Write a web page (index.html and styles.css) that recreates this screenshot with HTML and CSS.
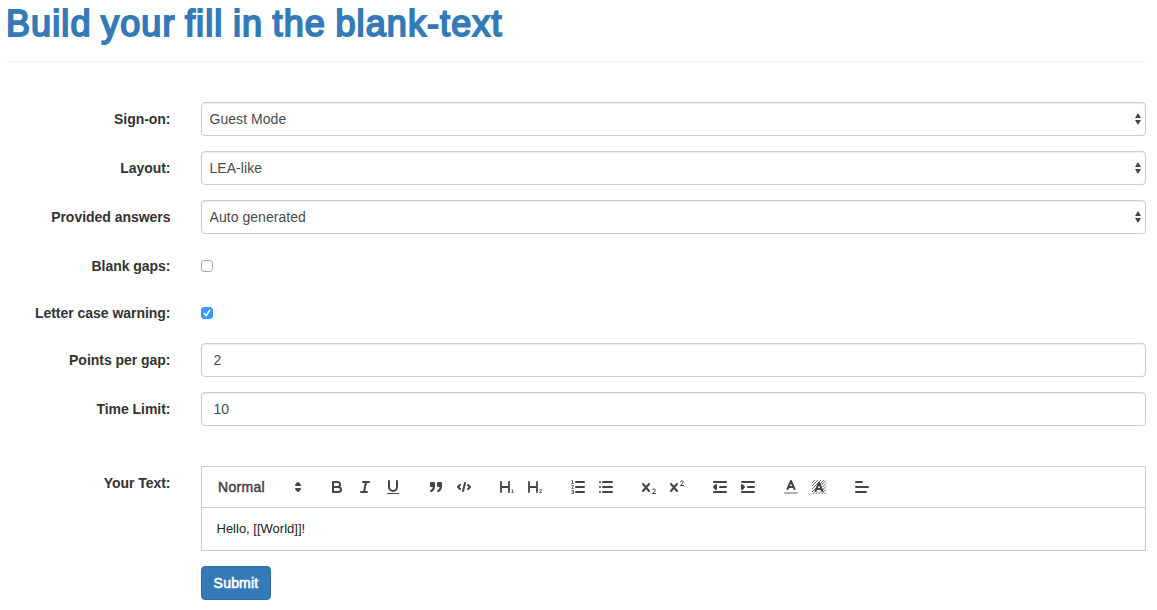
FILE: index.html
```html
<!DOCTYPE html>
<html lang="en">
<head>
<meta charset="utf-8">
<title>Build your fill in the blank-text</title>
<link rel="stylesheet" href="styles.css">
</head>
<body>
<main class="page">
  <h1 class="title">Build your fill in the blank-text</h1>
  <form class="form">
    <div class="row">
      <label class="label" for="sign">Sign-on:</label>
      <div class="select-wrap">
        <select class="control select" id="sign"><option>Guest Mode</option></select>
        <svg class="arrows" viewBox="0 0 6 12"><path d="M3 0 6 5H0ZM0 7H6L3 12Z"/></svg>
      </div>
    </div>
    <div class="row">
      <label class="label" for="layout">Layout:</label>
      <div class="select-wrap">
        <select class="control select" id="layout"><option>LEA-like</option></select>
        <svg class="arrows" viewBox="0 0 6 12"><path d="M3 0 6 5H0ZM0 7H6L3 12Z"/></svg>
      </div>
    </div>
    <div class="row">
      <label class="label" for="answers">Provided answers</label>
      <div class="select-wrap">
        <select class="control select" id="answers"><option>Auto generated</option></select>
        <svg class="arrows" viewBox="0 0 6 12"><path d="M3 0 6 5H0ZM0 7H6L3 12Z"/></svg>
      </div>
    </div>
    <div class="row row-check">
      <label class="label" for="blank">Blank gaps:</label>
      <input class="check" type="checkbox" id="blank">
    </div>
    <div class="row row-check">
      <label class="label" for="case">Letter case warning:</label>
      <span class="check-wrap"><input class="check" type="checkbox" id="case" checked><svg class="tick" viewBox="0 0 12 12"><path d="M3.3 6.4 5.2 8.7 8.8 3.2"/></svg></span>
    </div>
    <div class="row">
      <label class="label" for="points">Points per gap:</label>
      <input class="control" id="points" value="2">
    </div>
    <div class="row row-last">
      <label class="label" for="limit">Time Limit:</label>
      <input class="control" id="limit" value="10">
    </div>
    <div class="row">
      <span class="label">Your Text:</span>
      <div class="editor">
        <div class="toolbar">
          <div class="picker"><span class="picker-text">Normal</span>
            <svg class="icon" viewBox="0 0 18 18"><path class="s f" d="M7 11 9 13 11 11ZM7 7 9 5 11 7Z"/></svg>
          </div>
          <div class="group">
            <button type="button" class="tool" aria-label="Bold"><svg class="icon" viewBox="0 0 18 18"><path class="s" d="M5 4H9.5A2.5 2.5 0 0 1 9.5 9H5ZM5 9H10.5A2.5 2.5 0 0 1 10.5 14H5Z"/></svg></button>
            <button type="button" class="tool" aria-label="Italic"><svg class="icon" viewBox="0 0 18 18"><path class="s" d="M7 4H13M5 14H11M8 14 10 4"/></svg></button>
            <button type="button" class="tool" aria-label="Underline"><svg class="icon" viewBox="0 0 18 18"><path class="s" d="M5 3V9a4 4 0 0 0 8 0V3"/><rect class="f" x="3" y="15" width="12" height="1" rx=".5"/></svg></button>
          </div>
          <div class="group">
            <button type="button" class="tool" aria-label="Quote"><svg class="icon" viewBox="0 0 18 18"><path class="s f" d="M4 5H7V8H4ZM11 5H14V8H11Z"/><path class="s f" d="M7 8C7 12.03 4 13 4 13M14 8C14 12.03 11 13 11 13"/></svg></button>
            <button type="button" class="tool" aria-label="Code"><svg class="icon" viewBox="0 0 18 18"><path class="s" d="M5 7 3 9 5 11M13 7 15 9 13 11M10 5 8 13"/></svg></button>
          </div>
          <div class="group">
            <button type="button" class="tool" aria-label="Heading 1"><svg class="icon" viewBox="0 0 18 18"><path class="s heading" d="M3 4V14M11 4V14M3 9H11"/><path class="s digit" d="M13.5 11.7H14.5V14.2M13.3 14.4H15.7"/></svg></button>
            <button type="button" class="tool" aria-label="Heading 2"><svg class="icon" viewBox="0 0 18 18"><path class="s heading" d="M3 4V14M11 4V14M3 9H11"/><path class="s digit" d="M13.5 11.7H15.5V12.6L13.6 14.4H16"/></svg></button>
          </div>
          <div class="group">
            <button type="button" class="tool" aria-label="Numbered list"><svg class="icon" viewBox="0 0 18 18"><path class="s" d="M7 4H15M7 9H15M7 14H15"/><path class="s digit" d="M2.5 2.5H3.5V5.3M2.3 5.5H4.7M2.5 7.5H4.3V8.3L2.7 10.5H4.7M2.5 12.5H4.5V15.5H2.3M3 14H4.5"/></svg></button>
            <button type="button" class="tool" aria-label="Bulleted list"><svg class="icon" viewBox="0 0 18 18"><path class="s" d="M6 4H15M6 9H15M6 14H15M3 4H3M3 9H3M3 14H3"/></svg></button>
          </div>
          <div class="group">
            <button type="button" class="tool" aria-label="Subscript"><svg class="icon" viewBox="0 0 18 18"><path class="s" d="M3 6 9 13M9 6 3 13"/><path class="s thin" d="M12.5 11.8C12.8 10.4 15.3 10.5 15.3 12.1C15.3 13.6 12.5 14.5 12.5 15.5H15.6"/></svg></button>
            <button type="button" class="tool" aria-label="Superscript"><svg class="icon" viewBox="0 0 18 18"><path class="s" d="M3 6 9 13M9 6 3 13"/><path class="s thin" d="M12.5 3.8C12.8 2.4 15.3 2.5 15.3 4.1C15.3 5.6 12.5 6.5 12.5 7.5H15.6"/></svg></button>
          </div>
          <div class="group">
            <button type="button" class="tool" aria-label="Outdent"><svg class="icon" viewBox="0 0 18 18"><path class="s" d="M3 4H15M3 14H15M9 9H15"/><path class="s f" d="M5 7V11L3 9Z"/></svg></button>
            <button type="button" class="tool" aria-label="Indent"><svg class="icon" viewBox="0 0 18 18"><path class="s" d="M3 4H15M3 14H15M9 9H15"/><path class="s f" d="M3 7V11L5 9Z"/></svg></button>
          </div>
          <div class="group">
            <button type="button" class="tool" aria-label="Text colour"><svg class="icon" viewBox="0 0 18 18"><path class="s faint" d="M2.3 15H15.7"/><path class="s" d="M5.5 11 9 3 12.5 11M6.4 9H11.6"/></svg></button>
            <button type="button" class="tool" aria-label="Background colour"><svg class="icon" viewBox="0 0 18 18"><path class="hatch" d="M2 5 5 2M2 8 8 2M2 11 11 2M2 14 5.5 10.5M8.5 7.5 14 2M2.5 16 5 13.5M11.5 7 16 2.5M5.5 16 8 13.5M12.5 9 16 5.5M8.5 16 16 8.5M11.5 16 16 11.5M14.5 16 16 14.5"/><path class="s" d="M5.5 13 9 5 12.5 13M6.4 11H11.6"/></svg></button>
          </div>
          <div class="group">
            <button type="button" class="tool" aria-label="Align"><svg class="icon" viewBox="0 0 18 18"><path class="s" d="M3 4H9M3 9H15M3 14H13"/></svg></button>
          </div>
        </div>
        <div class="content">Hello, [[World]]!</div>
      </div>
    </div>
    <div class="row"><span></span><button type="button" class="submit">Submit</button></div>
  </form>
</main>
</body>
</html>
```
FILE: styles.css
```css
* { box-sizing: border-box; }
body { margin: 0; background: #fff; color: #333; font: 14px/20px "Liberation Sans", Arial, sans-serif; }
.page { padding: 0 11px 0 6px; }
.title { margin: 0 0 40px; height: 62px; padding-top: 4px; border-bottom: 1px solid #eee; color: #337ab7; font-size: 36px; line-height: 40px; font-weight: 400; letter-spacing: 1.1px; word-spacing: -1.6px; -webkit-text-stroke: 1.9px #337ab7; white-space: nowrap; }
.row { display: grid; grid-template-columns: 165px 945px; column-gap: 30px; margin-bottom: 15px; align-items: start; }
.row-check { height: 32px; }
.row-last { margin-bottom: 40px; }
.label { padding: 7px .5px 0 0; text-align: right; font-weight: 700; letter-spacing: -.03px; white-space: nowrap; }
.control { display: block; width: 100%; height: 34px; margin: 0; padding: 6px 12px 6px 11.5px; border: 1px solid #ccc; border-radius: 4px; background: #fff; box-shadow: inset 0 1px 1px rgba(0,0,0,.075); color: #4a4a4a; font: inherit; letter-spacing: .05px; }
.select-wrap { position: relative; }
.select { appearance: none; padding: 0 7.5px; }
.arrows { position: absolute; right: 5.5px; top: 11px; width: 6px; height: 12px; fill: #444; }
.check-wrap { position: relative; height: 32px; }
.check { appearance: none; display: block; width: 12px; height: 12px; margin: 11px 0 0; border: 1px solid #aaa; border-radius: 3px; background: #fff; }
.check:checked { border-color: #3b99fc; background: #3b99fc; }
.tick { position: absolute; left: 0; top: 11px; width: 12px; height: 12px; fill: none; stroke: #fff; stroke-width: 1.5; stroke-linecap: round; }
.editor { border: 1px solid #ccc; height: 85px; }
.toolbar { display: flex; gap: 15px; height: 41px; padding: 8px; border-bottom: 1px solid #ccc; }
.picker { display: flex; justify-content: space-between; align-items: center; width: 97px; margin-right: 1px; height: 24px; padding-left: 8px; color: #444; }
.picker-text { letter-spacing: .3px; -webkit-text-stroke: .5px #444; }
.group { display: flex; }
.tool { display: block; width: 28px; height: 24px; padding: 3px 5px; border: 0; background: none; }
.icon { display: block; width: 18px; height: 18px; }
.s { fill: none; stroke: #444; stroke-width: 2; stroke-linecap: round; stroke-linejoin: round; }
.f { fill: #444; }
.thin { stroke-width: 1; }
.digit { stroke-width: .8; stroke-linecap: butt; }
.heading { stroke-width: 1.8; }
.faint { opacity: .4; stroke-linecap: butt; }
.hatch { fill: none; stroke: #444; stroke-width: .8; }
.content { padding: 12px 14.5px; color: #222; font-size: 13px; line-height: 18px; }
.submit { width: 70px; height: 34px; padding: 0; border: 1px solid #2e6da4; border-radius: 4px; background: #337ab7; color: #fff; font: inherit; letter-spacing: .2px; -webkit-text-stroke: .6px #fff; }
```
